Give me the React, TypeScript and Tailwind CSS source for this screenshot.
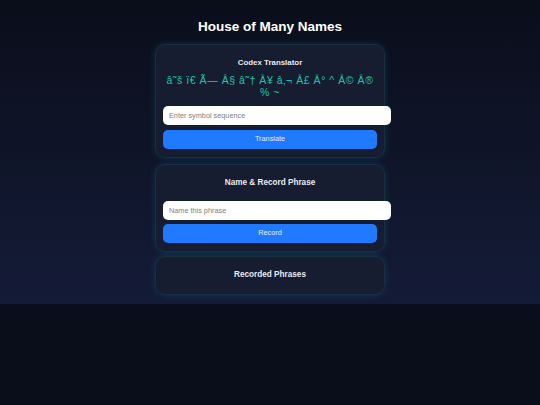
import React from "react";

const font = { fontFamily: '"Liberation Sans", Arial, sans-serif' };

function Card({ children, className = "" }: { children: React.ReactNode; className?: string }) {
  return (
    <div
      className={`w-[230px] rounded-[10px] bg-[#161d30] border border-[#172f40] shadow-[0_0_7px_rgba(20,190,210,0.18)] px-[7px] ${className}`}
    >
      {children}
    </div>
  );
}

export default function App() {
  return (
    <div className="min-h-screen bg-[#0a0e1b]" style={font}>
      <div className="flex flex-col items-center bg-gradient-to-b from-[#0a0e1b] to-[#141b37] pt-[19px] pb-[9px]">
        <h1 className="text-[13.5px] leading-[16px] font-bold text-white">House of Many Names</h1>
        <div className="mt-[9px] flex flex-col items-center">
          <Card className="pt-[12px] pb-[8px]">
            <h2 className="text-[7.9px] leading-[12px] font-bold text-[#e8eaf0] text-center">Codex Translator</h2>
            <p className="mt-[6px] text-[10.5px] leading-[11.5px] tracking-[0.55px] text-[#22c4ad] text-center">
              â˜š ï€ Ã— Â§ â˜† Â¥ â‚¬ Â£ Â° ^ Â© Â® % ~
            </p>
            <input
              placeholder="Enter symbol sequence"
              className="mt-[8px] block w-[228px] h-[19px] rounded-[5px] bg-white px-[6px] text-[7.3px] text-[#333] placeholder:text-[#808080] outline-none"
            />
            <button className="mt-[5px] block w-full h-[19px] rounded-[5px] bg-[#1f7aff] text-[7.3px] text-[#e6eeff]">
              Translate
            </button>
          </Card>
          <Card className="mt-[6px] pt-[12px] pb-[8px]">
            <h2 className="text-[8.2px] leading-[12px] font-bold text-[#e8eaf0] text-center">Name &amp; Record Phrase</h2>
            <input
              placeholder="Name this phrase"
              className="mt-[12px] block w-[228px] h-[19px] rounded-[5px] bg-white px-[6px] text-[7.3px] text-[#333] placeholder:text-[#808080] outline-none"
            />
            <button className="mt-[4px] block w-full h-[19px] rounded-[5px] bg-[#1f7aff] text-[7.3px] text-[#e6eeff]">
              Record
            </button>
          </Card>
          <Card className="mt-[4px] pt-[12px] pb-[13px]">
            <h2 className="text-[8.2px] leading-[12px] font-bold text-[#e8eaf0] text-center">Recorded Phrases</h2>
          </Card>
        </div>
      </div>
    </div>
  );
}
